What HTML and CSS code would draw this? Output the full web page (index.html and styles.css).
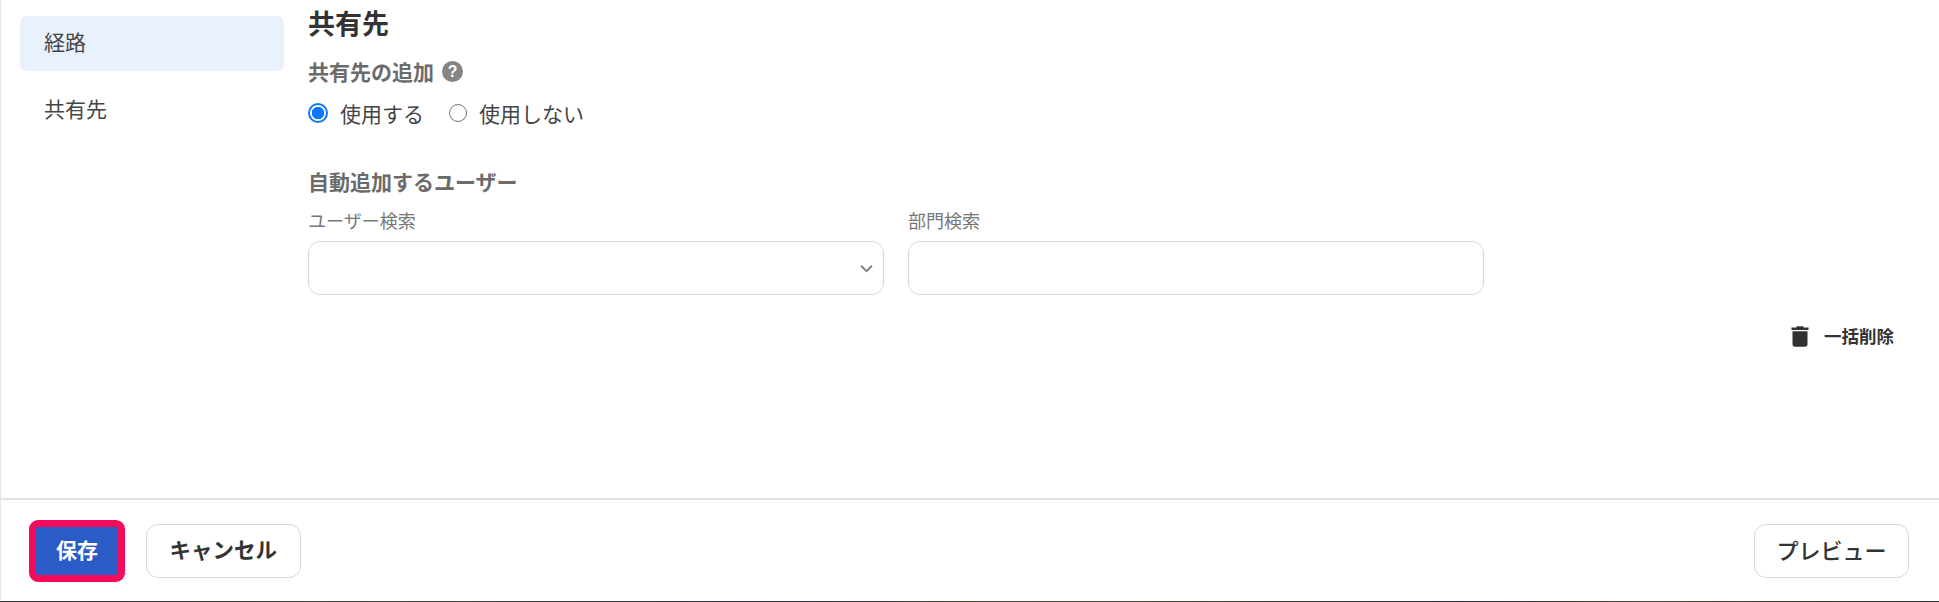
FILE: index.html
```html
<!DOCTYPE html>
<html lang="ja">
<head>
<meta charset="utf-8">
<title>共有先</title>
<link rel="stylesheet" href="styles.css">
</head>
<body>
<div class="page">
  <div class="main">
    <nav class="side">
      <a class="side-item active">経路</a>
      <a class="side-item">共有先</a>
    </nav>
    <section class="content">
      <h2 class="title">共有先</h2>
      <div class="label-row">
        <span class="label">共有先の追加</span>
        <svg class="help" viewBox="0 0 20 20"><circle cx="10" cy="10" r="10" fill="#858585"/><text x="10" y="15" text-anchor="middle" class="help-q">?</text></svg>
      </div>
      <div class="radios">
        <label class="radio"><span class="dot on"></span>使用する</label>
        <label class="radio"><span class="dot"></span>使用しない</label>
      </div>
      <h3 class="label auto">自動追加するユーザー</h3>
      <div class="fields">
        <div class="field">
          <div class="field-label">ユーザー検索</div>
          <div class="input select">
            <svg class="chev" viewBox="0 0 12 8"><path d="M1 1.5l5 5 5-5" fill="none" stroke="#808080" stroke-width="1.8"/></svg>
          </div>
        </div>
        <div class="field">
          <div class="field-label">部門検索</div>
          <div class="input"></div>
        </div>
      </div>
      <div class="bulk">
        <svg class="trash" viewBox="0 0 18 22"><path d="M6 1.2h6l1 1.3h4.5v2.6H.5V2.500H5zM1.500 6.300h15v13c0 1.400-1 2.400-2.400 2.400H3.900c-1.400 0-2.400-1-2.400-2.400z" fill="#333"/></svg>
        <span>一括削除</span>
      </div>
    </section>
  </div>
  <footer class="foot">
    <div class="foot-left">
      <button class="btn primary">保存</button>
      <button class="btn">キャンセル</button>
    </div>
    <button class="btn plain">プレビュー</button>
  </footer>
  <div class="stripe"></div>
</div>
</body>
</html>
```
FILE: styles.css
```css
* { box-sizing: border-box; }
html, body { margin: 0; height: 100%; background: #fff; }
body { font-family: "Noto Sans CJK JP", "Noto Sans", sans-serif; color: #333; overflow: hidden; }
.page { height: 602px; display: flex; flex-direction: column; border-left: 1px solid #e6e6e6; }
.main { flex: 1; display: flex; min-height: 0; }
.side { width: 283px; flex: none; padding: 16px 0 0 19px; display: flex; flex-direction: column; gap: 12px; }
.side-item { height: 55px; width: 264px; padding: 0 0 5px 24px; display: flex; align-items: center; font-size: 21px; color: #444; border-radius: 6px; }
.side-item.active { background: #e9f1fd; }
.content { width: 1586px; flex: none; margin-left: 24px; padding-top: 4px; display: flex; flex-direction: column; }
.title { margin: 0; font-size: 27px; line-height: 38px; font-weight: 700; color: #333; }
.label-row { display: flex; align-items: center; gap: 8px; margin-top: 10px; height: 38px; }
.label { font-size: 21px; font-weight: 700; color: #6b6b6b; margin: 0; }
.help { width: 21px; height: 21px; }
.help-q { font: 700 15px "Liberation Sans", sans-serif; fill: #fff; }
.radios { display: flex; gap: 25px; margin-top: 4px; height: 38px; align-items: center; }
.radio { display: flex; align-items: center; font-size: 21px; color: #444; }
.dot { width: 18px; height: 18px; border-radius: 50%; border: 1.500px solid #767676; background: #fff; margin-right: 12px; }
.dot.on { width: 20px; height: 20px; border: 2px solid #0a78ff; background: radial-gradient(circle, #0a78ff 0 6px, #fff 6.500px); margin-right: 12px; }
.auto { margin-top: 34px; line-height: 30px; }
.fields { display: flex; gap: 24px; width: 1176px; margin-top: 11px; }
.field { flex: 1; }
.field-label { font-size: 18px; line-height: 26px; color: #777; margin-bottom: 8px; }
.input { height: 54px; border: 1px solid #d9d9d9; border-radius: 12px; background: #fff; display: flex; align-items: center; justify-content: flex-end; padding-right: 10px; }
.chev { width: 13px; height: 9px; }
.bulk { display: flex; align-items: center; align-self: flex-end; height: 30px; margin-top: 26px; gap: 15px; font-size: 17.500px; font-weight: 700; color: #333; }
.trash { width: 18px; height: 22px; flex: none; }
.bulk span { white-space: nowrap; padding-bottom: 2px; }
.foot { height: 103px; flex: none; border-top: 2px solid #e3e3e3; display: flex; align-items: center; justify-content: space-between; padding: 0 30px 0 28px; }
.foot-left { display: flex; align-items: center; gap: 21px; }
.btn { height: 54px; padding: 0 22.500px 4px; font: 700 21.500px "Noto Sans CJK JP", "Noto Sans", sans-serif; color: #333; background: #fff; border: 1px solid #d9d9d9; border-radius: 12px; }
.btn.plain { font-weight: 500; font-size: 22px; padding: 0 21.500px 4px; }
.btn.primary { height: 62px; width: 96px; padding: 0 0 4px; border: 7px solid #f50a5c; border-radius: 9px; background: #2a5bc7; color: #fff; font-size: 21px; }
.stripe { height: 1px; flex: none; margin-left: -1px; background: linear-gradient(90deg, #3a3438, #4a4740 20%, #363444 40%, #5a5238 55%, #2e2e3c 75%, #5a4a38 85%, #2e3030); }
```
